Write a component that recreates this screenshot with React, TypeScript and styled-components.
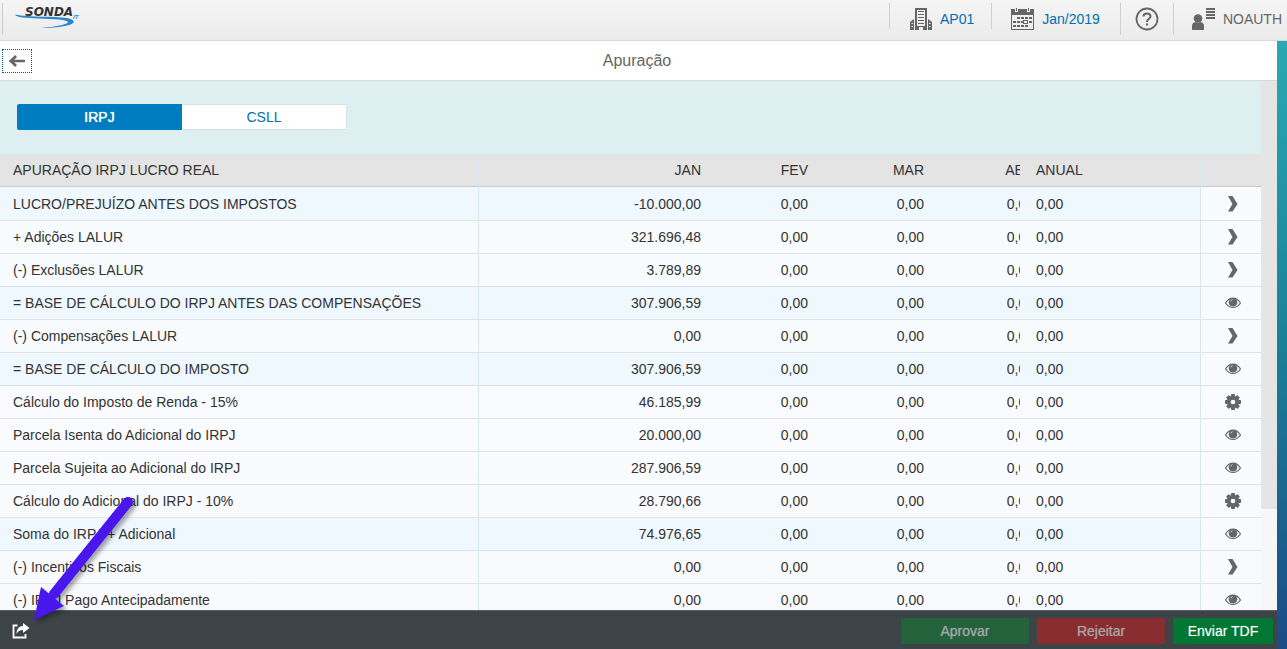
import React from "react";
import styled, { createGlobalStyle, css } from "styled-components";

const GlobalStyle = createGlobalStyle`
  *, *::before, *::after { box-sizing: border-box; }
  body {
    margin: 0;
    font-family: "Liberation Sans", Arial, sans-serif;
    font-size: 14px;
    line-height: 16px;
    color: #333;
  }
  button { font: inherit; cursor: pointer; }
`;

const Shell = styled.div`
  display: flex;
  flex-direction: column;
  height: 100vh;
  overflow: hidden;
`;

const TopBar = styled.header`
  display: flex;
  align-items: flex-start;
  justify-content: space-between;
  flex: none;
  height: 41px;
  padding: 3px 0 0 2px;
  background: linear-gradient(#f5f5f5, #ebebeb);
  border-bottom: 1px solid #d9d9d9;
`;

const Brand = styled.a`
  display: block;
  height: 32px;
  padding-left: 11px;
  border-left: 1px solid #ccc;
`;

const TopActions = styled.nav`
  display: flex;
`;

const TopButton = styled.button<{ $pad: string; $tall?: boolean; $muted?: boolean }>`
  display: flex;
  align-items: center;
  gap: 8px;
  height: ${(p) => (p.$tall ? 32 : 26)}px;
  padding: ${(p) => p.$pad};
  background: none;
  border: 0;
  border-left: 1px solid #d0d0d0;
  color: ${(p) => (p.$muted ? "#666" : "#0070b1")};
  white-space: nowrap;
  svg { flex: none; color: #666; }
`;

const Body = styled.div`
  display: flex;
  flex: 1;
  min-height: 0;
  padding-right: 10px;
  background: linear-gradient(#2aa9b2, #188098 50%, #1a4b86);
`;

const Page = styled.main`
  display: flex;
  flex-direction: column;
  flex: 1;
  min-width: 0;
  background: #fff;
`;

const TitleBar = styled.div`
  display: grid;
  grid-template-columns: 40px 1fr 40px;
  align-items: center;
  flex: none;
  height: 40px;
  padding: 0 5px 0 2px;
  border-bottom: 1px solid #d9d9d9;
`;

const BackButton = styled.button`
  display: flex;
  align-items: center;
  justify-content: center;
  width: 30px;
  height: 24px;
  padding: 0;
  background: none;
  border: 1px dotted #00599b;
  color: #666;
`;

const Title = styled.h1`
  margin: 0;
  font-size: 16px;
  font-weight: 400;
  line-height: 20px;
  text-align: center;
  color: #666;
`;

const Content = styled.div`
  display: flex;
  flex: 1;
  min-height: 0;
`;

const Scroller = styled.div`
  flex: 1;
  min-width: 0;
  overflow-x: hidden;
  overflow-y: auto;
  scrollbar-width: none;
  background: linear-gradient(#f8fcfd, #f9fafd);
`;

const ScrollTrack = styled.div`
  flex: none;
  width: 16px;
  background: #f7f7f7;
`;

const ScrollThumb = styled.div`
  height: 81%;
  background: #e5e5e5;
`;

const Filters = styled.div`
  display: flex;
  height: 73px;
  padding: 23px 17px;
  background: #deeff2;
`;

const Segment = styled.button<{ $active?: boolean }>`
  width: 165px;
  height: 26px;
  padding: 0;
  border: 1px solid #d8e2e5;
  border-left: 0;
  border-radius: 0 2px 2px 0;
  background: #fff;
  color: #0070b1;
  ${(p) =>
    p.$active &&
    css`
      border: 0;
      border-radius: 2px 0 0 2px;
      background: #007cc0;
      color: #fff;
      text-shadow: 0 0 1px #fff;
    `}
`;

const Grid = styled.table`
  width: 100%;
  table-layout: fixed;
  border-collapse: separate;
  border-spacing: 0;
`;

const Col = styled.col<{ $w?: string }>`
  width: ${(p) => p.$w ?? "auto"};
`;

const cell = css<{ $align?: "right" | "center"; $flush?: boolean; $lined?: boolean; $indent?: number }>`
  height: 33px;
  padding: ${(p) => (p.$flush ? "0" : `0 8px 0 ${p.$indent ?? 8}px`)};
  border-bottom: 1px solid #e1e4e6;
  border-right: ${(p) => (p.$lined ? "1px solid #d6e8ee" : "0")};
  text-align: ${(p) => p.$align ?? "left"};
  font-weight: 400;
  white-space: nowrap;
  overflow: hidden;
`;

const Th = styled.th`
  ${cell}
  background: #e4e4e4;
  border-bottom-color: #cbcbcb;
`;

const Td = styled.td`${cell}`;

const Row = styled.tr<{ $strong?: boolean }>`
  td:not(:last-child) { background: ${(p) => (p.$strong ? "#eff7ff" : "transparent")}; }
  &:first-child td { height: 34px; padding-top: 1px; }
`;

const Overflowing = styled.div`
  width: 102px;
  text-align: right;
`;

const IconButton = styled.button`
  display: inline-flex;
  align-items: center;
  justify-content: center;
  width: 32px;
  height: 24px;
  padding: 0;
  background: none;
  border: 0;
  color: #666;
  vertical-align: middle;
`;

const Footer = styled.footer`
  position: relative;
  display: flex;
  align-items: center;
  gap: 8px;
  flex: none;
  height: 39px;
  padding: 2px 4px 0 5px;
  background: #3d4447;
  border-top: 1px solid #5a6063;
  color: #fff;
`;

const ShareButton = styled(IconButton)`
  margin-right: auto;
  color: #fff;
`;

const FooterButton = styled.button<{ $bg: string; $w: number }>`
  width: ${(p) => p.$w}px;
  height: 26px;
  padding: 0;
  border: 0;
  border-radius: 2px;
  background: ${(p) => p.$bg};
  color: #fff;
  text-shadow: 0 0 1px rgba(255, 255, 255, 0.4);
  &:disabled { color: #a3a4a5; cursor: default; }
`;

const Pointer = styled.svg`
  position: absolute;
  left: 28px;
  bottom: 26px;
  overflow: visible;
  filter: drop-shadow(3px 3px 2px rgba(0, 0, 0, 0.35));
  pointer-events: none;
`;

const Logo = () => (
  <svg width="70" height="30" viewBox="0 0 70 30" role="img" aria-label="SONDA IT">
    <path d="M1 11.500C15 14.500 40 13 53 15C62 17 62 20.500 53 22.500C45 24.500 35 25 27 25C40 24 54 21.500 54 19C53 16.500 40 16 25 15.500C12 15 2 14.500 1 11.500Z" fill="#2787cc" />
    <text x="11" y="13" fontFamily="DejaVu Sans, sans-serif" fontSize="12" fontWeight="700" fontStyle="italic" fill="#333">SONDA</text>
    <text x="59" y="16" fontFamily="Liberation Sans, sans-serif" fontSize="6" fontWeight="700" fontStyle="italic" fill="#2787cc">IT</text>
  </svg>
);

const BuildingIcon = () => (
  <svg width="22" height="22" viewBox="0 0 22 22" aria-hidden="true">
    <path d="M5 0H17V22H13V19H9V22H5Z M7 2V18H15V2Z M0 14L4 11V22H0Z M18 11L22 14V22H18Z" fill="currentColor" fillRule="evenodd" />
    <path d="M8 3.500H14M8 6.500H14M8 9.500H14M8 12.500H14M8 15.500H14" stroke="currentColor" />
    <path d="M1.500 15.500H3M1.500 18.500H3M19 15.500H20.500M19 18.500H20.500" stroke="#f0f0f0" />
  </svg>
);

const CalendarIcon = () => (
  <svg width="23" height="22" viewBox="0 0 23 22" aria-hidden="true">
    <path d="M0 1H23V22H0Z M1 7V21H22V7Z" fill="currentColor" fillRule="evenodd" />
    <path d="M5.500 0V4M17.500 0V4" stroke="#f0f0f0" strokeWidth="3" />
    <path d="M5.500 0V3M17.500 0V3" stroke="currentColor" strokeWidth="1" />
    <path d="M6 10H21M2 14H21M2 18H17" stroke="currentColor" strokeWidth="2" strokeDasharray="3 1" />
    <rect x="12.500" y="12.500" width="4" height="3" fill="#f0f0f0" stroke="currentColor" />
  </svg>
);

const HelpIcon = () => (
  <svg width="24" height="24" viewBox="0 0 24 24" fill="none" stroke="currentColor" aria-hidden="true">
    <circle cx="12" cy="12" r="10.500" strokeWidth="1.800" />
    <path d="M8.500 9.500C8.500 5.500 15.500 5.500 15.500 9.500C15.500 12 12 11.500 12 15" strokeWidth="2" />
    <path d="M12 16.500V18.500" strokeWidth="2.200" />
  </svg>
);

const UserIcon = () => (
  <svg width="23" height="22" viewBox="0 0 23 22" fill="currentColor" aria-hidden="true">
    <circle cx="6" cy="10.500" r="4.300" />
    <path d="M0 22V18C0 15.500 1.500 14.300 3.500 14L6 15L8.500 14C10.500 14.300 12 15.500 12 18V22Z" />
    <path d="M14 0H23V2H14Z M14 3H23V5H14Z M14 6H23V8H14Z M14 9H23V11H14Z" />
  </svg>
);

const BackIcon = () => (
  <svg width="16" height="12" viewBox="0 0 16 12" fill="none" stroke="currentColor" aria-hidden="true">
    <path d="M1.500 6H15" strokeWidth="2.600" strokeLinecap="round" />
    <path d="M7 1L2 6L7 11" strokeWidth="2.800" />
  </svg>
);

const ChevronIcon = () => (
  <svg width="10" height="16" viewBox="0 0 10 16" fill="currentColor" aria-hidden="true">
    <path d="M0 0H4.500L9.500 8L4.500 15.500H0L4.500 8Z" />
  </svg>
);

const EyeIcon = () => (
  <svg width="16" height="12" viewBox="0 0 16 12" aria-hidden="true">
    <path d="M0.500 6C4.500 -0.500 11.500 -0.500 15.500 6C11.500 12 4.500 12 0.500 6Z" fill="none" stroke="currentColor" strokeWidth="1.200" />
    <circle cx="8" cy="5.200" r="4.300" fill="currentColor" />
    <path d="M5.800 4.400C6 3.400 6.600 2.900 7.500 2.700" fill="none" stroke="#fff" strokeWidth="0.700" />
  </svg>
);

const GearIcon = () => (
  <svg width="16" height="16" viewBox="0 0 16 16" aria-hidden="true">
    <g fill="currentColor">
      {[0, 45, 90, 135].map((a) => (
        <rect key={a} x="6" y="0" width="4" height="16" rx="0.800" transform={`rotate(${a} 8 8)`} />
      ))}
      <circle cx="8" cy="8" r="6.200" />
    </g>
    <circle cx="8" cy="8" r="2.300" fill="#fff" />
  </svg>
);

const ShareIcon = () => (
  <svg width="18" height="16" viewBox="0 0 18 16" aria-hidden="true">
    <path d="M5.500 2.500H1.500V14.500H13.500V11" fill="none" stroke="currentColor" strokeWidth="1.800" />
    <path d="M11 0L17.500 5L11 10V7C8 7 6 8 4.500 11C4.500 6 7 3 11 3Z" fill="currentColor" />
  </svg>
);

type Action = "open" | "view" | "config";

const actionIcons: Record<Action, { label: string; Icon: () => React.ReactElement }> = {
  open: { label: "Abrir", Icon: ChevronIcon },
  view: { label: "Visualizar", Icon: EyeIcon },
  config: { label: "Configurar", Icon: GearIcon },
};

const rows: { name: string; jan: string; action: Action; strong?: boolean }[] = [
  { name: "LUCRO/PREJUÍZO ANTES DOS IMPOSTOS", jan: "-10.000,00", action: "open", strong: true },
  { name: "+ Adições LALUR", jan: "321.696,48", action: "open" },
  { name: "(-) Exclusões LALUR", jan: "3.789,89", action: "open" },
  { name: "= BASE DE CÁLCULO DO IRPJ ANTES DAS COMPENSAÇÕES", jan: "307.906,59", action: "view", strong: true },
  { name: "(-) Compensações LALUR", jan: "0,00", action: "open" },
  { name: "= BASE DE CÁLCULO DO IMPOSTO", jan: "307.906,59", action: "view", strong: true },
  { name: "Cálculo do Imposto de Renda - 15%", jan: "46.185,99", action: "config" },
  { name: "Parcela Isenta do Adicional do IRPJ", jan: "20.000,00", action: "view" },
  { name: "Parcela Sujeita ao Adicional do IRPJ", jan: "287.906,59", action: "view" },
  { name: "Cálculo do Adicional do IRPJ - 10%", jan: "28.790,66", action: "config" },
  { name: "Soma do IRPJ + Adicional", jan: "74.976,65", action: "view", strong: true },
  { name: "(-) Incentivos Fiscais", jan: "0,00", action: "open" },
  { name: "(-) IRPJ Pago Antecipadamente", jan: "0,00", action: "view" },
];

export default function App() {
  return (
    <Shell>
      <GlobalStyle />
      <TopBar>
        <Brand href="#"><Logo /></Brand>
        <TopActions>
          <TopButton $pad="6px 17px 0 20px"><BuildingIcon />AP01</TopButton>
          <TopButton $pad="6px 20px 0 19px"><CalendarIcon />Jan/2019</TopButton>
          <TopButton $tall $pad="0 14px" aria-label="Ajuda"><HelpIcon /></TopButton>
          <TopButton $tall $muted $pad="0 5px 0 18px"><UserIcon />NOAUTH</TopButton>
        </TopActions>
      </TopBar>
      <Body>
        <Page>
          <TitleBar>
            <BackButton aria-label="Voltar"><BackIcon /></BackButton>
            <Title>Apuração</Title>
          </TitleBar>
          <Content>
            <Scroller>
              <Filters>
                <Segment $active aria-pressed="true">IRPJ</Segment>
                <Segment aria-pressed="false">CSLL</Segment>
              </Filters>
              <Grid>
                <colgroup>
                  <Col $w="38%" />
                  <Col />
                  <Col $w="107px" />
                  <Col $w="116px" />
                  <Col $w="88px" />
                  <Col $w="181px" />
                  <Col $w="60px" />
                </colgroup>
                <thead>
                  <tr>
                    <Th $indent={13} $lined>APURAÇÃO IRPJ LUCRO REAL</Th>
                    <Th $align="right">JAN</Th>
                    <Th $align="right">FEV</Th>
                    <Th $align="right">MAR</Th>
                    <Th $flush><Overflowing>ABR</Overflowing></Th>
                    <Th $indent={16} $lined>ANUAL</Th>
                    <Th />
                  </tr>
                </thead>
                <tbody>
                  {rows.map(({ name, jan, action, strong }) => {
                    const { label, Icon } = actionIcons[action];
                    return (
                      <Row key={name} $strong={strong}>
                        <Td $indent={13} $lined>{name}</Td>
                        <Td $align="right">{jan}</Td>
                        <Td $align="right">0,00</Td>
                        <Td $align="right">0,00</Td>
                        <Td $flush><Overflowing>0,00</Overflowing></Td>
                        <Td $indent={16} $lined>0,00</Td>
                        <Td $align="center" $indent={12}>
                          <IconButton aria-label={label}><Icon /></IconButton>
                        </Td>
                      </Row>
                    );
                  })}
                </tbody>
              </Grid>
            </Scroller>
            <ScrollTrack><ScrollThumb /></ScrollTrack>
          </Content>
          <Footer>
            <ShareButton aria-label="Compartilhar"><ShareIcon /></ShareButton>
            <FooterButton $bg="#24623c" $w={128} disabled>Aprovar</FooterButton>
            <FooterButton $bg="#8a2d30" $w={128} disabled>Rejeitar</FooterButton>
            <FooterButton $bg="#007833" $w={100}>Enviar TDF</FooterButton>
            <Pointer width="112" height="130" viewBox="0 0 112 130" aria-hidden="true">
              <path d="M100 9L26 101" stroke="#4a16ee" strokeWidth="10" strokeLinecap="round" />
              <path d="M6 127L13 94L36 113Z" fill="#4a16ee" />
            </Pointer>
          </Footer>
        </Page>
      </Body>
    </Shell>
  );
}
